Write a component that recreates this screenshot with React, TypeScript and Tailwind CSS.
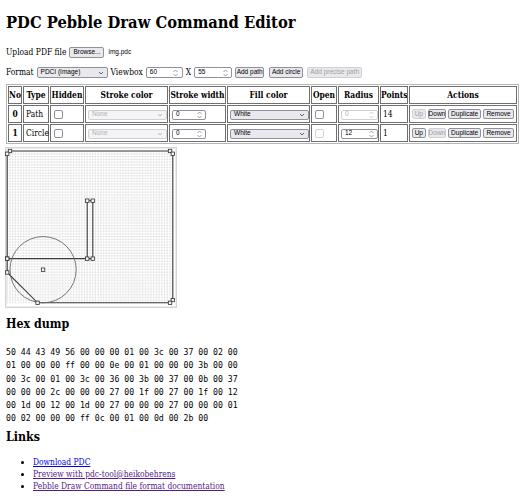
import React from "react";

const serif = "font-['DejaVu_Serif_Condensed','DejaVu_Serif',serif] [font-stretch:semi-condensed]";
const ui = "font-['Liberation_Sans',Arial,sans-serif] text-[6.5px] leading-none whitespace-nowrap";

const hexLines = [
  "50 44 43 49 56 00 00 00 01 00 3c 00 37 00 02 00",
  "01 00 00 00 ff 00 00 0e 00 01 00 00 00 3b 00 00",
  "00 3c 00 01 00 3c 00 36 00 3b 00 37 00 0b 00 37",
  "00 00 00 2c 00 00 00 27 00 1f 00 27 00 1f 00 12",
  "00 1d 00 12 00 1d 00 27 00 00 00 27 00 00 00 01",
  "00 02 00 00 00 ff 0c 00 01 00 0d 00 2b 00",
];

const pathPoints: [number, number][] = [
  [1, 0], [59, 0], [60, 1], [60, 54], [59, 55], [11, 55], [0, 44],
  [0, 39], [31, 39], [31, 18], [29, 18], [29, 39], [0, 39], [0, 1],
];

const Btn = (props: { label: string; disabled?: boolean; w: string }) => (
  <span
    className={`${ui} ${props.w} inline-flex h-[10px] items-center justify-center rounded-[2px] border bg-[#e9e9ed] ${
      props.disabled ? "border-[#d0d0d4] text-[#a0a0a0]" : "border-[#8f8f9d] text-black"
    }`}
  >
    {props.label}
  </span>
);

const Chevron = (props: { light?: boolean }) => (
  <svg width="6" height="4" viewBox="0 0 6 4" className="shrink-0">
    <path d="M1 1 L3 3 L5 1" fill="none" stroke={props.light ? "#aaa" : "#444"} strokeWidth="0.8" />
  </svg>
);

const Spin = (props: { light?: boolean }) => (
  <svg width="7" height="8" viewBox="0 0 7 8" className="shrink-0">
    <path
      d="M1.5 3 L3.5 1 L5.5 3 M1.5 5 L3.5 7 L5.5 5"
      fill="none"
      stroke={props.light ? "#bbb" : "#777"}
      strokeWidth="0.7"
    />
  </svg>
);

const Select = (props: { value: string; disabled?: boolean; w: string; h?: string }) => (
  <span
    className={`${ui} ${props.w} ${props.h ?? "h-[10px]"} inline-flex items-center justify-between rounded-[2px] border px-[3px] ${
      props.disabled ? "border-[#d0d0d4] bg-[#f4f4f6] text-[#b0b0b0]" : "border-[#8f8f9d] bg-[#e9e9ed] text-black"
    }`}
  >
    <span>{props.value}</span>
    <Chevron light={props.disabled} />
  </span>
);

const NumInput = (props: { value: string; disabled?: boolean; w: string; h?: string }) => (
  <span
    className={`${ui} ${props.w} ${props.h ?? "h-[10px]"} inline-flex items-center rounded-[2px] border pl-[3px] ${
      props.disabled ? "border-[#d0d0d4] text-[#b0b0b0]" : "border-[#8f8f9d] text-black"
    } bg-white`}
  >
    <span className="flex-1">{props.value}</span>
    <span className="flex w-[12px] justify-center">
      <Spin light={props.disabled} />
    </span>
  </span>
);

const Check = (props: { disabled?: boolean }) => (
  <span
    className={`block h-[9px] w-[9px] rounded-[2px] border bg-white ${
      props.disabled ? "border-[#d4d4d8]" : "border-[#8f8f9d]"
    }`}
  />
);

const Canvas = () => {
  const s = 2.76;
  const ox = 2.2;
  const oy = 4;
  const X = (x: number) => ox + x * s;
  const Y = (y: number) => oy + y * s;
  const d = pathPoints.map((p, i) => `${i ? "L" : "M"}${X(p[0]).toFixed(1)} ${Y(p[1]).toFixed(1)}`).join(" ") + " Z";
  const gx = Array.from({ length: 61 }, (_, i) => X(i));
  const gy = Array.from({ length: 56 }, (_, i) => Y(i));
  return (
    <svg width="172" height="161" viewBox="0 0 172 161" className="block">
      <rect x="0.5" y="0.5" width="171" height="160" fill="white" stroke="#d4d4d4" />
      <rect x="1.5" y="1.5" width="169" height="158" fill="none" stroke="#ececec" />
      {gx.map((x, i) => (
        <line key={"x" + i} x1={x} y1={oy} x2={x} y2={Y(55)} stroke="#cbcbcb" strokeWidth="0.6" strokeDasharray="0.8 0.8" />
      ))}
      {gy.map((y, i) => (
        <line key={"y" + i} x1={ox} y1={y} x2={X(60)} y2={y} stroke="#cbcbcb" strokeWidth="0.6" strokeDasharray="0.8 0.8" />
      ))}
      <path d={d} fill="none" stroke="#3a3a3a" strokeWidth="1.1" />
      <circle cx={X(13)} cy={Y(43)} r={12 * s} fill="none" stroke="#666" strokeWidth="0.9" />
      {pathPoints.map((p, i) => (
        <rect key={"h" + i} x={X(p[0]) - 1.7} y={Y(p[1]) - 1.7} width="3.4" height="3.4" fill="#f4f4f4" stroke="#333" strokeWidth="0.8" />
      ))}
      <rect x={X(13) - 1.7} y={Y(43) - 1.7} width="3.4" height="3.4" fill="#f4f4f4" stroke="#333" strokeWidth="0.8" />
    </svg>
  );
};

const th = "border border-[#6f6f6f] p-0 font-bold text-center align-middle h-[18px] whitespace-nowrap overflow-hidden";
const td = "border border-[#6f6f6f] px-[2px] py-0 align-middle h-[18px] whitespace-nowrap";

export default function App() {
  return (
    <div className={`${serif} bg-white text-black px-[6px] pt-[13px] pb-4 text-[8.4px] leading-[11px]`}>
      <h1 className="text-[16.4px] leading-[20px] font-bold">PDC Pebble Draw Command Editor</h1>

      <div className="mt-[13px] flex items-center h-[13px]">
        <span>Upload PDF file</span>
        <span className="ml-[3px] flex"><Btn label="Browse..." w="w-[35px] h-[11px]" /></span>
        <span className={`${ui} ml-[4px]`}>img.pdc</span>
      </div>

      <div className="mt-[7px] flex items-center h-[13px]">
        <span>Format</span>
        <span className="ml-[3px] flex"><Select value="PDCI (Image)" w="w-[71px]" h="h-[11px]" /></span>
        <span className="ml-[3px]">Viewbox</span>
        <span className="ml-[3px] flex"><NumInput value="60" w="w-[37px]" h="h-[11px]" /></span>
        <span className="ml-[3px]">X</span>
        <span className="ml-[3px] flex"><NumInput value="55" w="w-[38px]" h="h-[11px]" /></span>
        <span className="ml-[3px] flex"><Btn label="Add path" w="w-[29px] h-[11px]" /></span>
        <span className="ml-[5px] flex"><Btn label="Add circle" w="w-[34px] h-[11px]" /></span>
        <span className="ml-[4px] flex"><Btn label="Add precise path" disabled w="w-[55px] h-[11px]" /></span>
      </div>

      <table className="mt-[5px] table-fixed w-[513px] border-separate border-spacing-[1px] border border-[#b5b5b5]">
        <thead>
          <tr>
            <th className={`${th} w-[14px]`}>No</th>
            <th className={`${th} w-[26px]`}>Type</th>
            <th className={`${th} w-[34px]`}>Hidden</th>
            <th className={`${th} w-[83px]`}>Stroke color</th>
            <th className={`${th} w-[57px]`}>Stroke width</th>
            <th className={`${th} w-[83px]`}>Fill color</th>
            <th className={`${th} w-[26px]`}>Open</th>
            <th className={`${th} w-[41px]`}>Radius</th>
            <th className={`${th} w-[28px]`}>Points</th>
            <th className={`${th} w-[108px]`}>Actions</th>
          </tr>
        </thead>
        <tbody>
          {[
            { no: "0", type: "Path", radius: "0", rDis: true, points: "14", openDis: false, upDis: true, downDis: false },
            { no: "1", type: "Circle", radius: "12", rDis: false, points: "1", openDis: true, upDis: false, downDis: true },
          ].map((r) => (
            <tr key={r.no}>
              <th className={`${td} font-bold text-center`}>{r.no}</th>
              <td className={td}>{r.type}</td>
              <td className={`${td} pl-[3px]`}><Check /></td>
              <td className={td}><Select value="None" disabled w="w-[79px]" /></td>
              <td className={td}><NumInput value="0" w="w-[34px]" /></td>
              <td className={td}><Select value="White" w="w-[79px]" /></td>
              <td className={`${td} pl-[3px]`}><Check disabled={r.openDis} /></td>
              <td className={td}><NumInput value={r.radius} disabled={r.rDis} w="w-[37px]" /></td>
              <td className={td}>{r.points}</td>
              <td className={td}>
                <div className="flex items-center gap-[2px]">
                  <Btn label="Up" disabled={r.upDis} w="w-[14px]" />
                  <Btn label="Down" disabled={r.downDis} w="w-[19px]" />
                  <Btn label="Duplicate" w="w-[34px]" />
                  <Btn label="Remove" w="w-[32px]" />
                </div>
              </td>
            </tr>
          ))}
        </tbody>
      </table>

      <div className="mt-[3px] -ml-[1px]">
        <Canvas />
      </div>

      <h2 className="mt-[8px] text-[12.3px] leading-[16px] font-bold">Hex dump</h2>
      <pre className="mt-[14px] font-['DejaVu_Sans_Mono',monospace] text-[8.2px] leading-[13.3px]">
        {hexLines.join("\n")}
      </pre>

      <h2 className="mt-[3px] text-[12.3px] leading-[16px] font-bold">Links</h2>
      <ul className="mt-[11px] list-disc pl-[27px] leading-[12px]">
        <li><a href="#" className="text-[#0000ee] underline">Download PDC</a></li>
        <li><a href="#" className="text-[#551a8b] underline">Preview with pdc-tool@heikobehrens</a></li>
        <li><a href="#" className="text-[#551a8b] underline">Pebble Draw Command file format documentation</a></li>
      </ul>
    </div>
  );
}
